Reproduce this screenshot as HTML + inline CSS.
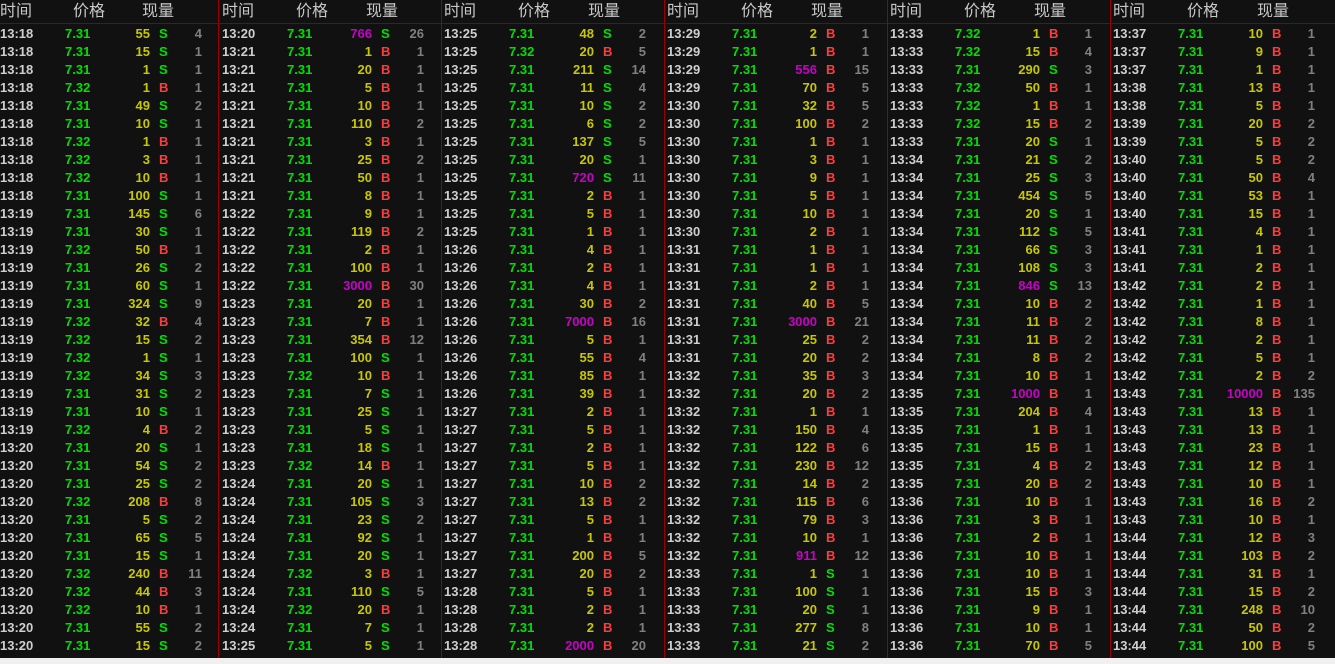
<!DOCTYPE html>
<html><head><meta charset="utf-8"><style>
html,body{margin:0;padding:0;background:#111;width:1335px;height:664px;overflow:hidden;font-family:"Liberation Sans",Arial,sans-serif;}
.pn{position:absolute;top:0;width:222px;height:658px;}
.sep{position:absolute;top:0;width:1px;height:658px;background:#9a0000;}
.hl{position:absolute;left:0;top:23px;width:1335px;height:1px;background:#8a0000;}
.h{position:relative;height:25px;font-family:"Liberation Sans","Noto Sans CJK SC",sans-serif;font-size:16px;color:#c8c8c8;line-height:23px;}
.h span{position:absolute;top:0}
p{margin:0;position:relative;height:18px;line-height:18px;font-size:13px;}
p b,p i,p u,p s,p kbd,p em{position:absolute;top:0;font-weight:bold;font-style:normal;text-decoration:none;font-family:inherit;font-size:inherit;}
p b{left:0;color:#cfcfcf}
p i{left:65px;color:#00e000}
p u{left:90px;width:60px;text-align:right;color:#c8c800}
p u.m{color:#c800c8}
p s{left:159px;color:#00e000}
p kbd{left:159px;color:#ff3c3c}
p em{left:171px;width:31px;text-align:right;color:#808080}
.bot{position:absolute;left:0;top:658px;width:1335px;height:6px;background:#f0f0f0;}
</style></head><body>
<div class="hl"></div>
<div class="sep" style="left:218px"></div>
<div class="sep" style="left:441px"></div>
<div class="sep" style="left:664px"></div>
<div class="sep" style="left:887px"></div>
<div class="sep" style="left:1110px"></div>

<div class="pn" style="left:0">
<div class="h"><span style="left:0">时间</span><span style="left:73px">价格</span><span style="left:142px">现量</span></div>
<p><b>13:18</b><i>7.31</i><u>55</u><s>S</s><em>4</em></p>
<p><b>13:18</b><i>7.31</i><u>15</u><s>S</s><em>1</em></p>
<p><b>13:18</b><i>7.31</i><u>1</u><s>S</s><em>1</em></p>
<p><b>13:18</b><i>7.32</i><u>1</u><kbd>B</kbd><em>1</em></p>
<p><b>13:18</b><i>7.31</i><u>49</u><s>S</s><em>2</em></p>
<p><b>13:18</b><i>7.31</i><u>10</u><s>S</s><em>1</em></p>
<p><b>13:18</b><i>7.32</i><u>1</u><kbd>B</kbd><em>1</em></p>
<p><b>13:18</b><i>7.32</i><u>3</u><kbd>B</kbd><em>1</em></p>
<p><b>13:18</b><i>7.32</i><u>10</u><kbd>B</kbd><em>1</em></p>
<p><b>13:18</b><i>7.31</i><u>100</u><s>S</s><em>1</em></p>
<p><b>13:19</b><i>7.31</i><u>145</u><s>S</s><em>6</em></p>
<p><b>13:19</b><i>7.31</i><u>30</u><s>S</s><em>1</em></p>
<p><b>13:19</b><i>7.32</i><u>50</u><kbd>B</kbd><em>1</em></p>
<p><b>13:19</b><i>7.31</i><u>26</u><s>S</s><em>2</em></p>
<p><b>13:19</b><i>7.31</i><u>60</u><s>S</s><em>1</em></p>
<p><b>13:19</b><i>7.31</i><u>324</u><s>S</s><em>9</em></p>
<p><b>13:19</b><i>7.32</i><u>32</u><kbd>B</kbd><em>4</em></p>
<p><b>13:19</b><i>7.32</i><u>15</u><s>S</s><em>2</em></p>
<p><b>13:19</b><i>7.32</i><u>1</u><s>S</s><em>1</em></p>
<p><b>13:19</b><i>7.32</i><u>34</u><s>S</s><em>3</em></p>
<p><b>13:19</b><i>7.31</i><u>31</u><s>S</s><em>2</em></p>
<p><b>13:19</b><i>7.31</i><u>10</u><s>S</s><em>1</em></p>
<p><b>13:19</b><i>7.32</i><u>4</u><kbd>B</kbd><em>2</em></p>
<p><b>13:20</b><i>7.31</i><u>20</u><s>S</s><em>1</em></p>
<p><b>13:20</b><i>7.31</i><u>54</u><s>S</s><em>2</em></p>
<p><b>13:20</b><i>7.31</i><u>25</u><s>S</s><em>2</em></p>
<p><b>13:20</b><i>7.32</i><u>208</u><kbd>B</kbd><em>8</em></p>
<p><b>13:20</b><i>7.31</i><u>5</u><s>S</s><em>2</em></p>
<p><b>13:20</b><i>7.31</i><u>65</u><s>S</s><em>5</em></p>
<p><b>13:20</b><i>7.31</i><u>15</u><s>S</s><em>1</em></p>
<p><b>13:20</b><i>7.32</i><u>240</u><kbd>B</kbd><em>11</em></p>
<p><b>13:20</b><i>7.32</i><u>44</u><kbd>B</kbd><em>3</em></p>
<p><b>13:20</b><i>7.32</i><u>10</u><kbd>B</kbd><em>1</em></p>
<p><b>13:20</b><i>7.31</i><u>55</u><s>S</s><em>2</em></p>
<p><b>13:20</b><i>7.31</i><u>15</u><s>S</s><em>2</em></p>
</div>

<div class="pn" style="left:222px">
<div class="h"><span style="left:0">时间</span><span style="left:74px">价格</span><span style="left:144px">现量</span></div>
<p><b>13:20</b><i>7.31</i><u class="m">766</u><s>S</s><em>26</em></p>
<p><b>13:21</b><i>7.31</i><u>1</u><kbd>B</kbd><em>1</em></p>
<p><b>13:21</b><i>7.31</i><u>20</u><kbd>B</kbd><em>1</em></p>
<p><b>13:21</b><i>7.31</i><u>5</u><kbd>B</kbd><em>1</em></p>
<p><b>13:21</b><i>7.31</i><u>10</u><kbd>B</kbd><em>1</em></p>
<p><b>13:21</b><i>7.31</i><u>110</u><kbd>B</kbd><em>2</em></p>
<p><b>13:21</b><i>7.31</i><u>3</u><kbd>B</kbd><em>1</em></p>
<p><b>13:21</b><i>7.31</i><u>25</u><kbd>B</kbd><em>2</em></p>
<p><b>13:21</b><i>7.31</i><u>50</u><kbd>B</kbd><em>1</em></p>
<p><b>13:21</b><i>7.31</i><u>8</u><kbd>B</kbd><em>1</em></p>
<p><b>13:22</b><i>7.31</i><u>9</u><kbd>B</kbd><em>1</em></p>
<p><b>13:22</b><i>7.31</i><u>119</u><kbd>B</kbd><em>2</em></p>
<p><b>13:22</b><i>7.31</i><u>2</u><kbd>B</kbd><em>1</em></p>
<p><b>13:22</b><i>7.31</i><u>100</u><kbd>B</kbd><em>1</em></p>
<p><b>13:22</b><i>7.31</i><u class="m">3000</u><kbd>B</kbd><em>30</em></p>
<p><b>13:23</b><i>7.31</i><u>20</u><kbd>B</kbd><em>1</em></p>
<p><b>13:23</b><i>7.31</i><u>7</u><kbd>B</kbd><em>1</em></p>
<p><b>13:23</b><i>7.31</i><u>354</u><kbd>B</kbd><em>12</em></p>
<p><b>13:23</b><i>7.31</i><u>100</u><s>S</s><em>1</em></p>
<p><b>13:23</b><i>7.32</i><u>10</u><kbd>B</kbd><em>1</em></p>
<p><b>13:23</b><i>7.31</i><u>7</u><s>S</s><em>1</em></p>
<p><b>13:23</b><i>7.31</i><u>25</u><s>S</s><em>1</em></p>
<p><b>13:23</b><i>7.31</i><u>5</u><s>S</s><em>1</em></p>
<p><b>13:23</b><i>7.31</i><u>18</u><s>S</s><em>1</em></p>
<p><b>13:23</b><i>7.32</i><u>14</u><kbd>B</kbd><em>1</em></p>
<p><b>13:24</b><i>7.31</i><u>20</u><s>S</s><em>1</em></p>
<p><b>13:24</b><i>7.31</i><u>105</u><s>S</s><em>3</em></p>
<p><b>13:24</b><i>7.31</i><u>23</u><s>S</s><em>2</em></p>
<p><b>13:24</b><i>7.31</i><u>92</u><s>S</s><em>1</em></p>
<p><b>13:24</b><i>7.31</i><u>20</u><s>S</s><em>1</em></p>
<p><b>13:24</b><i>7.32</i><u>3</u><kbd>B</kbd><em>1</em></p>
<p><b>13:24</b><i>7.31</i><u>110</u><s>S</s><em>5</em></p>
<p><b>13:24</b><i>7.32</i><u>20</u><kbd>B</kbd><em>1</em></p>
<p><b>13:24</b><i>7.31</i><u>7</u><s>S</s><em>1</em></p>
<p><b>13:25</b><i>7.31</i><u>5</u><s>S</s><em>1</em></p>
</div>

<div class="pn" style="left:444px">
<div class="h"><span style="left:0">时间</span><span style="left:74px">价格</span><span style="left:144px">现量</span></div>
<p><b>13:25</b><i>7.31</i><u>48</u><s>S</s><em>2</em></p>
<p><b>13:25</b><i>7.32</i><u>20</u><kbd>B</kbd><em>5</em></p>
<p><b>13:25</b><i>7.31</i><u>211</u><s>S</s><em>14</em></p>
<p><b>13:25</b><i>7.31</i><u>11</u><s>S</s><em>4</em></p>
<p><b>13:25</b><i>7.31</i><u>10</u><s>S</s><em>2</em></p>
<p><b>13:25</b><i>7.31</i><u>6</u><s>S</s><em>2</em></p>
<p><b>13:25</b><i>7.31</i><u>137</u><s>S</s><em>5</em></p>
<p><b>13:25</b><i>7.31</i><u>20</u><s>S</s><em>1</em></p>
<p><b>13:25</b><i>7.31</i><u class="m">720</u><s>S</s><em>11</em></p>
<p><b>13:25</b><i>7.31</i><u>2</u><kbd>B</kbd><em>1</em></p>
<p><b>13:25</b><i>7.31</i><u>5</u><kbd>B</kbd><em>1</em></p>
<p><b>13:25</b><i>7.31</i><u>1</u><kbd>B</kbd><em>1</em></p>
<p><b>13:26</b><i>7.31</i><u>4</u><kbd>B</kbd><em>1</em></p>
<p><b>13:26</b><i>7.31</i><u>2</u><kbd>B</kbd><em>1</em></p>
<p><b>13:26</b><i>7.31</i><u>4</u><kbd>B</kbd><em>1</em></p>
<p><b>13:26</b><i>7.31</i><u>30</u><kbd>B</kbd><em>2</em></p>
<p><b>13:26</b><i>7.31</i><u class="m">7000</u><kbd>B</kbd><em>16</em></p>
<p><b>13:26</b><i>7.31</i><u>5</u><kbd>B</kbd><em>1</em></p>
<p><b>13:26</b><i>7.31</i><u>55</u><kbd>B</kbd><em>4</em></p>
<p><b>13:26</b><i>7.31</i><u>85</u><kbd>B</kbd><em>1</em></p>
<p><b>13:26</b><i>7.31</i><u>39</u><kbd>B</kbd><em>1</em></p>
<p><b>13:27</b><i>7.31</i><u>2</u><kbd>B</kbd><em>1</em></p>
<p><b>13:27</b><i>7.31</i><u>5</u><kbd>B</kbd><em>1</em></p>
<p><b>13:27</b><i>7.31</i><u>2</u><kbd>B</kbd><em>1</em></p>
<p><b>13:27</b><i>7.31</i><u>5</u><kbd>B</kbd><em>1</em></p>
<p><b>13:27</b><i>7.31</i><u>10</u><kbd>B</kbd><em>2</em></p>
<p><b>13:27</b><i>7.31</i><u>13</u><kbd>B</kbd><em>2</em></p>
<p><b>13:27</b><i>7.31</i><u>5</u><kbd>B</kbd><em>1</em></p>
<p><b>13:27</b><i>7.31</i><u>1</u><kbd>B</kbd><em>1</em></p>
<p><b>13:27</b><i>7.31</i><u>200</u><kbd>B</kbd><em>5</em></p>
<p><b>13:27</b><i>7.31</i><u>20</u><kbd>B</kbd><em>2</em></p>
<p><b>13:28</b><i>7.31</i><u>5</u><kbd>B</kbd><em>1</em></p>
<p><b>13:28</b><i>7.31</i><u>2</u><kbd>B</kbd><em>1</em></p>
<p><b>13:28</b><i>7.31</i><u>2</u><kbd>B</kbd><em>1</em></p>
<p><b>13:28</b><i>7.31</i><u class="m">2000</u><kbd>B</kbd><em>20</em></p>
</div>

<div class="pn" style="left:667px">
<div class="h"><span style="left:0">时间</span><span style="left:74px">价格</span><span style="left:144px">现量</span></div>
<p><b>13:29</b><i>7.31</i><u>2</u><kbd>B</kbd><em>1</em></p>
<p><b>13:29</b><i>7.31</i><u>1</u><kbd>B</kbd><em>1</em></p>
<p><b>13:29</b><i>7.31</i><u class="m">556</u><kbd>B</kbd><em>15</em></p>
<p><b>13:29</b><i>7.31</i><u>70</u><kbd>B</kbd><em>5</em></p>
<p><b>13:30</b><i>7.31</i><u>32</u><kbd>B</kbd><em>5</em></p>
<p><b>13:30</b><i>7.31</i><u>100</u><kbd>B</kbd><em>2</em></p>
<p><b>13:30</b><i>7.31</i><u>1</u><kbd>B</kbd><em>1</em></p>
<p><b>13:30</b><i>7.31</i><u>3</u><kbd>B</kbd><em>1</em></p>
<p><b>13:30</b><i>7.31</i><u>9</u><kbd>B</kbd><em>1</em></p>
<p><b>13:30</b><i>7.31</i><u>5</u><kbd>B</kbd><em>1</em></p>
<p><b>13:30</b><i>7.31</i><u>10</u><kbd>B</kbd><em>1</em></p>
<p><b>13:30</b><i>7.31</i><u>2</u><kbd>B</kbd><em>1</em></p>
<p><b>13:31</b><i>7.31</i><u>1</u><kbd>B</kbd><em>1</em></p>
<p><b>13:31</b><i>7.31</i><u>1</u><kbd>B</kbd><em>1</em></p>
<p><b>13:31</b><i>7.31</i><u>2</u><kbd>B</kbd><em>1</em></p>
<p><b>13:31</b><i>7.31</i><u>40</u><kbd>B</kbd><em>5</em></p>
<p><b>13:31</b><i>7.31</i><u class="m">3000</u><kbd>B</kbd><em>21</em></p>
<p><b>13:31</b><i>7.31</i><u>25</u><kbd>B</kbd><em>2</em></p>
<p><b>13:31</b><i>7.31</i><u>20</u><kbd>B</kbd><em>2</em></p>
<p><b>13:32</b><i>7.31</i><u>35</u><kbd>B</kbd><em>3</em></p>
<p><b>13:32</b><i>7.31</i><u>20</u><kbd>B</kbd><em>2</em></p>
<p><b>13:32</b><i>7.31</i><u>1</u><kbd>B</kbd><em>1</em></p>
<p><b>13:32</b><i>7.31</i><u>150</u><kbd>B</kbd><em>4</em></p>
<p><b>13:32</b><i>7.31</i><u>122</u><kbd>B</kbd><em>6</em></p>
<p><b>13:32</b><i>7.31</i><u>230</u><kbd>B</kbd><em>12</em></p>
<p><b>13:32</b><i>7.31</i><u>14</u><kbd>B</kbd><em>2</em></p>
<p><b>13:32</b><i>7.31</i><u>115</u><kbd>B</kbd><em>6</em></p>
<p><b>13:32</b><i>7.31</i><u>79</u><kbd>B</kbd><em>3</em></p>
<p><b>13:32</b><i>7.31</i><u>10</u><kbd>B</kbd><em>1</em></p>
<p><b>13:32</b><i>7.31</i><u class="m">911</u><kbd>B</kbd><em>12</em></p>
<p><b>13:33</b><i>7.31</i><u>1</u><s>S</s><em>1</em></p>
<p><b>13:33</b><i>7.31</i><u>100</u><s>S</s><em>1</em></p>
<p><b>13:33</b><i>7.31</i><u>20</u><s>S</s><em>1</em></p>
<p><b>13:33</b><i>7.31</i><u>277</u><s>S</s><em>8</em></p>
<p><b>13:33</b><i>7.31</i><u>21</u><s>S</s><em>2</em></p>
</div>

<div class="pn" style="left:890px">
<div class="h"><span style="left:0">时间</span><span style="left:74px">价格</span><span style="left:144px">现量</span></div>
<p><b>13:33</b><i>7.32</i><u>1</u><kbd>B</kbd><em>1</em></p>
<p><b>13:33</b><i>7.32</i><u>15</u><kbd>B</kbd><em>4</em></p>
<p><b>13:33</b><i>7.31</i><u>290</u><s>S</s><em>3</em></p>
<p><b>13:33</b><i>7.32</i><u>50</u><kbd>B</kbd><em>1</em></p>
<p><b>13:33</b><i>7.32</i><u>1</u><kbd>B</kbd><em>1</em></p>
<p><b>13:33</b><i>7.32</i><u>15</u><kbd>B</kbd><em>2</em></p>
<p><b>13:33</b><i>7.31</i><u>20</u><s>S</s><em>1</em></p>
<p><b>13:34</b><i>7.31</i><u>21</u><s>S</s><em>2</em></p>
<p><b>13:34</b><i>7.31</i><u>25</u><s>S</s><em>3</em></p>
<p><b>13:34</b><i>7.31</i><u>454</u><s>S</s><em>5</em></p>
<p><b>13:34</b><i>7.31</i><u>20</u><s>S</s><em>1</em></p>
<p><b>13:34</b><i>7.31</i><u>112</u><s>S</s><em>5</em></p>
<p><b>13:34</b><i>7.31</i><u>66</u><s>S</s><em>3</em></p>
<p><b>13:34</b><i>7.31</i><u>108</u><s>S</s><em>3</em></p>
<p><b>13:34</b><i>7.31</i><u class="m">846</u><s>S</s><em>13</em></p>
<p><b>13:34</b><i>7.31</i><u>10</u><kbd>B</kbd><em>2</em></p>
<p><b>13:34</b><i>7.31</i><u>11</u><kbd>B</kbd><em>2</em></p>
<p><b>13:34</b><i>7.31</i><u>11</u><kbd>B</kbd><em>2</em></p>
<p><b>13:34</b><i>7.31</i><u>8</u><kbd>B</kbd><em>2</em></p>
<p><b>13:34</b><i>7.31</i><u>10</u><kbd>B</kbd><em>1</em></p>
<p><b>13:35</b><i>7.31</i><u class="m">1000</u><kbd>B</kbd><em>1</em></p>
<p><b>13:35</b><i>7.31</i><u>204</u><kbd>B</kbd><em>4</em></p>
<p><b>13:35</b><i>7.31</i><u>1</u><kbd>B</kbd><em>1</em></p>
<p><b>13:35</b><i>7.31</i><u>15</u><kbd>B</kbd><em>1</em></p>
<p><b>13:35</b><i>7.31</i><u>4</u><kbd>B</kbd><em>2</em></p>
<p><b>13:35</b><i>7.31</i><u>20</u><kbd>B</kbd><em>2</em></p>
<p><b>13:36</b><i>7.31</i><u>10</u><kbd>B</kbd><em>1</em></p>
<p><b>13:36</b><i>7.31</i><u>3</u><kbd>B</kbd><em>1</em></p>
<p><b>13:36</b><i>7.31</i><u>2</u><kbd>B</kbd><em>1</em></p>
<p><b>13:36</b><i>7.31</i><u>10</u><kbd>B</kbd><em>1</em></p>
<p><b>13:36</b><i>7.31</i><u>10</u><kbd>B</kbd><em>1</em></p>
<p><b>13:36</b><i>7.31</i><u>15</u><kbd>B</kbd><em>3</em></p>
<p><b>13:36</b><i>7.31</i><u>9</u><kbd>B</kbd><em>1</em></p>
<p><b>13:36</b><i>7.31</i><u>10</u><kbd>B</kbd><em>1</em></p>
<p><b>13:36</b><i>7.31</i><u>70</u><kbd>B</kbd><em>5</em></p>
</div>

<div class="pn" style="left:1113px">
<div class="h"><span style="left:0">时间</span><span style="left:74px">价格</span><span style="left:144px">现量</span></div>
<p><b>13:37</b><i>7.31</i><u>10</u><kbd>B</kbd><em>1</em></p>
<p><b>13:37</b><i>7.31</i><u>9</u><kbd>B</kbd><em>1</em></p>
<p><b>13:37</b><i>7.31</i><u>1</u><kbd>B</kbd><em>1</em></p>
<p><b>13:38</b><i>7.31</i><u>13</u><kbd>B</kbd><em>1</em></p>
<p><b>13:38</b><i>7.31</i><u>5</u><kbd>B</kbd><em>1</em></p>
<p><b>13:39</b><i>7.31</i><u>20</u><kbd>B</kbd><em>2</em></p>
<p><b>13:39</b><i>7.31</i><u>5</u><kbd>B</kbd><em>2</em></p>
<p><b>13:40</b><i>7.31</i><u>5</u><kbd>B</kbd><em>2</em></p>
<p><b>13:40</b><i>7.31</i><u>50</u><kbd>B</kbd><em>4</em></p>
<p><b>13:40</b><i>7.31</i><u>53</u><kbd>B</kbd><em>1</em></p>
<p><b>13:40</b><i>7.31</i><u>15</u><kbd>B</kbd><em>1</em></p>
<p><b>13:41</b><i>7.31</i><u>4</u><kbd>B</kbd><em>1</em></p>
<p><b>13:41</b><i>7.31</i><u>1</u><kbd>B</kbd><em>1</em></p>
<p><b>13:41</b><i>7.31</i><u>2</u><kbd>B</kbd><em>1</em></p>
<p><b>13:42</b><i>7.31</i><u>2</u><kbd>B</kbd><em>1</em></p>
<p><b>13:42</b><i>7.31</i><u>1</u><kbd>B</kbd><em>1</em></p>
<p><b>13:42</b><i>7.31</i><u>8</u><kbd>B</kbd><em>1</em></p>
<p><b>13:42</b><i>7.31</i><u>2</u><kbd>B</kbd><em>1</em></p>
<p><b>13:42</b><i>7.31</i><u>5</u><kbd>B</kbd><em>1</em></p>
<p><b>13:42</b><i>7.31</i><u>2</u><kbd>B</kbd><em>2</em></p>
<p><b>13:43</b><i>7.31</i><u class="m">10000</u><kbd>B</kbd><em>135</em></p>
<p><b>13:43</b><i>7.31</i><u>13</u><kbd>B</kbd><em>1</em></p>
<p><b>13:43</b><i>7.31</i><u>13</u><kbd>B</kbd><em>1</em></p>
<p><b>13:43</b><i>7.31</i><u>23</u><kbd>B</kbd><em>1</em></p>
<p><b>13:43</b><i>7.31</i><u>12</u><kbd>B</kbd><em>1</em></p>
<p><b>13:43</b><i>7.31</i><u>10</u><kbd>B</kbd><em>1</em></p>
<p><b>13:43</b><i>7.31</i><u>16</u><kbd>B</kbd><em>2</em></p>
<p><b>13:43</b><i>7.31</i><u>10</u><kbd>B</kbd><em>1</em></p>
<p><b>13:44</b><i>7.31</i><u>12</u><kbd>B</kbd><em>3</em></p>
<p><b>13:44</b><i>7.31</i><u>103</u><kbd>B</kbd><em>2</em></p>
<p><b>13:44</b><i>7.31</i><u>31</u><kbd>B</kbd><em>1</em></p>
<p><b>13:44</b><i>7.31</i><u>15</u><kbd>B</kbd><em>2</em></p>
<p><b>13:44</b><i>7.31</i><u>248</u><kbd>B</kbd><em>10</em></p>
<p><b>13:44</b><i>7.31</i><u>50</u><kbd>B</kbd><em>2</em></p>
<p><b>13:44</b><i>7.31</i><u>100</u><kbd>B</kbd><em>5</em></p>
</div>

<div class="bot"></div>
</body></html>
